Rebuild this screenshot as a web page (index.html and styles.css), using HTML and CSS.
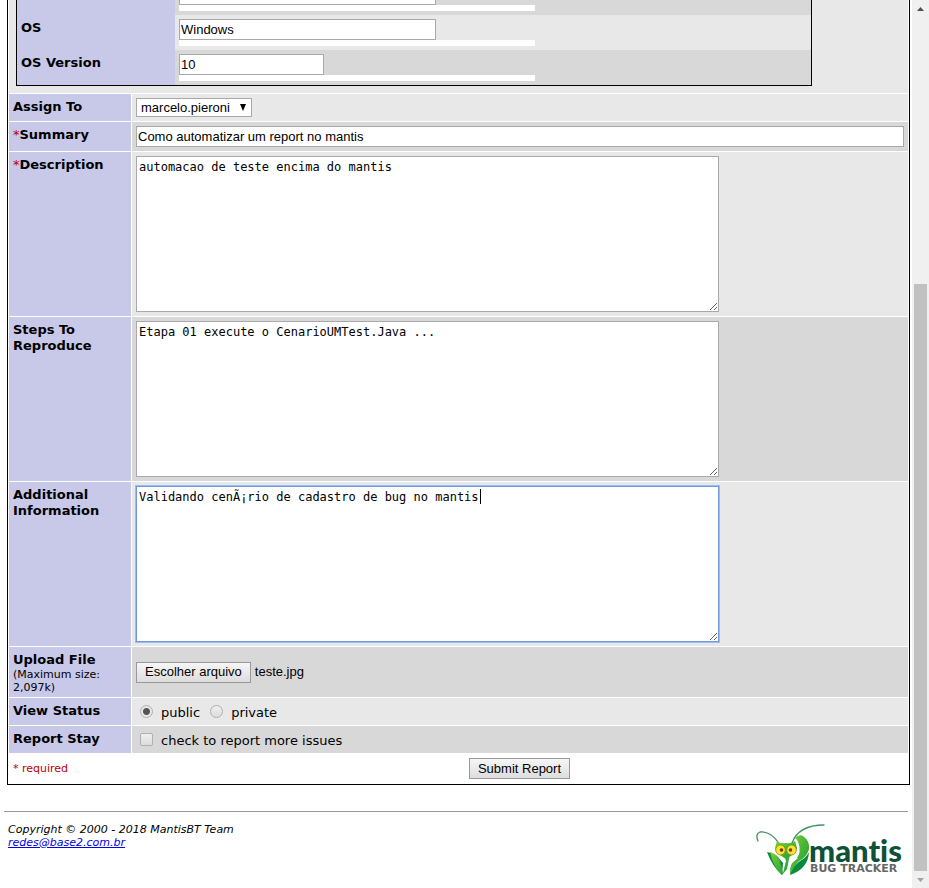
FILE: index.html
```html
<!DOCTYPE html>
<html lang="en">
<head>
<meta charset="utf-8">
<title>Report Issue - MantisBT</title>
<link rel="stylesheet" href="styles.css">
</head>
<body>
<div class="page">
  <form class="report">
    <div class="profile-row">
      <div class="profile">
        <label class="profile-label" for="platform"></label>
        <div class="profile-value odd"><input class="field medium" id="platform" type="text"><div class="suggest"></div></div>
        <label class="profile-label" for="os">OS</label>
        <div class="profile-value"><input class="field medium" id="os" type="text" value="Windows"><div class="suggest"></div></div>
        <label class="profile-label" for="os-version">OS Version</label>
        <div class="profile-value odd"><input class="field short" id="os-version" type="text" value="10"><div class="suggest"></div></div>
      </div>
    </div>
    <div class="row">
      <label class="label" for="assign">Assign To</label>
      <div class="value">
        <div class="select-box"><select class="select" id="assign"><option>marcelo.pieroni</option></select><svg class="arrow" viewBox="0 0 6 7" aria-hidden="true"><path d="M0 0h6L3 7z"/></svg></div>
      </div>
    </div>
    <div class="row">
      <label class="label" for="summary"><span class="star">*</span>Summary</label>
      <div class="value odd"><input class="field" id="summary" type="text" value="Como automatizar um report no mantis"></div>
    </div>
    <div class="row">
      <label class="label" for="description"><span class="star">*</span>Description</label>
      <div class="value"><textarea class="area" id="description">automacao de teste encima do mantis</textarea></div>
    </div>
    <div class="row">
      <label class="label" for="steps">Steps To Reproduce</label>
      <div class="value odd"><textarea class="area" id="steps">Etapa 01 execute o CenarioUMTest.Java ...</textarea></div>
    </div>
    <div class="row">
      <label class="label" for="additional">Additional Information</label>
      <div class="value"><div class="area-box"><textarea class="area active" id="additional">Validando cenÃ¡rio de cadastro de bug no mantis</textarea><span class="caret"></span></div></div>
    </div>
    <div class="row">
      <div class="label">Upload File<div class="hint">(Maximum size: 2,097k)</div></div>
      <div class="value odd file"><button class="button" type="button">Escolher arquivo</button><span class="filename">teste.jpg</span></div>
    </div>
    <div class="row">
      <div class="label">View Status</div>
      <div class="value options">
        <label class="option"><input class="radio" type="radio" name="view" checked>public</label>
        <label class="option"><input class="radio" type="radio" name="view">private</label>
      </div>
    </div>
    <div class="row">
      <div class="label">Report Stay</div>
      <div class="value odd options"><label class="option"><input class="check" type="checkbox">check to report more issues</label></div>
    </div>
    <div class="actions">
      <span class="required">* required</span>
      <div class="submit"><button class="button" type="submit">Submit Report</button></div>
    </div>
  </form>
  <footer class="footer">
    <address class="copyright">Copyright © 2000 - 2018 MantisBT Team<br><a href="mailto:redes@base2.com.br">redes@base2.com.br</a></address>
    <svg class="logo" viewBox="0 0 148 54" role="img" aria-label="Mantis Bug Tracker">
      <defs>
        <linearGradient id="leaf" x1="0" y1="0" x2="1" y2="1"><stop offset="0" stop-color="#7ccf38"/><stop offset="1" stop-color="#159a35"/></linearGradient>
      </defs>
      <g fill="none" stroke="#3f9360" stroke-width="1.300" stroke-linecap="round">
        <path d="M23 21C18 12 10 8 4 9Q-1 11 2 18"/>
        <path d="M36 20C40 9 49 2 68 2"/>
      </g>
      <path fill="#0a8a3a" d="M11 29Q18 30 22 34L27 40 26 52Q16 43 11 29z"/>
      <path fill="url(#leaf)" d="M14 29Q24 32 25 42L27 50 30 38 28 31 34 31 31 46 26 52Q17 44 14 29z"/>
      <path fill="url(#leaf)" d="M39 15Q43 11 47 13Q54 18 53 26Q51 34 43 38Q38 43 34 52Q33 40 41 35Q45 29 43 22Q42 17 39 15z"/>
      <path fill="#fff" d="M45 26L40 31 43 31 38 35 42 35 36 40Q36 34 45 26z"/>
      <path fill="#0a8a3a" d="M53 29Q52 46 34 52Q37 43 44 38Q50 35 53 29z"/>
      <path fill="url(#leaf)" d="M21 18Q24 21 30 20Q36 21 39 18L41 25Q39 31 33 34L30 36 27 34Q21 31 19 25z"/>
      <ellipse cx="24.500" cy="27" rx="4.800" ry="5" fill="#ffe02e" stroke="#6b9c16" stroke-width=".8"/>
      <ellipse cx="35.500" cy="27" rx="4.800" ry="5" fill="#ffe02e" stroke="#6b9c16" stroke-width=".8"/>
      <circle cx="25.500" cy="27" r="1.800" fill="#74390b"/>
      <circle cx="34.500" cy="27" r="1.800" fill="#74390b"/>
      <text class="logo-name" x="53" y="39">mantis</text>
      <text class="logo-sub" x="54" y="49">BUG TRACKER</text>
    </svg>
  </footer>
</div>
<div class="scrollbar" aria-hidden="true">
  <svg class="scroll-arrow" viewBox="0 0 17 17"><path fill="#505050" d="M5 11h7L8.500 7z"/></svg>
  <div class="track"><div class="thumb"></div></div>
  <svg class="scroll-arrow" viewBox="0 0 17 17"><path fill="#a3a3a3" d="M5 7h7l-3.500 4z"/></svg>
</div>
</body>
</html>
```
FILE: styles.css
```css
* { box-sizing: border-box; }
body {
  margin: 0;
  display: flex;
  height: 100vh;
  overflow: hidden;
  background: #fff;
  color: #000;
  font: 13px/16px Verdana, "DejaVu Sans", sans-serif;
}
.page { flex: 1; min-width: 0; }
.report {
  margin: 0 2px 0 7px;
  padding: 0 1px;
  border: solid #000;
  border-width: 0 1px 1px;
}
.profile-row {
  overflow: hidden;
  padding: 0 96px 7px 7px;
  background: #e8e8e8;
}
.profile {
  display: grid;
  grid-template-columns: 158px 1fr;
  margin-top: -20px;
  border: solid #000;
  border-width: 0 1px 1px;
}
.profile-label, .label {
  padding: 5px 4px 3px;
  background: #c8c8e8;
  font-weight: bold;
}
.profile-value, .value { padding: 4px; background: #e8e8e8; }
.suggest { width: 356px; max-width: 100%; height: 6px; background: #fff; }
.row {
  display: grid;
  grid-template-columns: 122px 1fr;
  column-gap: 1px;
  margin-top: 1px;
}
.odd { background: #d8d8d8; }
.star { color: #b00; font-weight: normal; }
.field, .select, .button {
  display: block;
  height: 21px;
  border: 1px solid #a9a9a9;
  background: #fff;
  color: #000;
  font: 13px/16px Arial, "Liberation Sans", sans-serif;
}
.field { width: 100%; padding: 1px; }
.medium { width: 257px; }
.short { width: 145px; }
.select-box { position: relative; width: 116px; }
.select { appearance: none; width: 100%; height: 19px; padding: 0 4px; border-radius: 0; }
.arrow { position: absolute; top: 6px; right: 6px; width: 6px; height: 7px; }
.area, .area-box { font: 12px/15px "DejaVu Sans Mono", monospace; }
.area {
  display: block;
  width: 583px;
  max-width: 100%;
  height: 156px;
  padding: 3px 2px;
  border: 1px solid #a9a9a9;
  background: #fff;
  color: #000;
}
.active { border-color: #6f98e0; outline: 1px solid #9dbcf0; }
.area-box { position: relative; }
.caret {
  position: absolute;
  top: 3px;
  left: calc(47ch + 4px);
  width: 1px;
  height: 15px;
  background: #000;
}
.hint { font-size: 11px; line-height: 13px; font-weight: normal; }
.file { display: flex; align-items: center; gap: 4px; }
.filename { font: 13px/16px Arial, "Liberation Sans", sans-serif; }
.button {
  padding: 0 8px;
  border-color: #999;
  background: linear-gradient(#f6f6f6, #ddd);
}
.options { display: flex; gap: 6px; }
.option { display: flex; align-items: flex-end; gap: 8px; padding-top: 3px; }
.radio, .check {
  appearance: none;
  align-self: flex-start;
  width: 13px;
  height: 13px;
  margin: 0 0 0 4px;
  border: 1px solid #b0b0b0;
  background: linear-gradient(#eee, #ddd);
}
.radio { border-radius: 50%; }
.radio:checked { background: radial-gradient(circle, #555 0 3px, #e8e8e8 4px); }
.check { border-radius: 2px; }
.actions {
  display: grid;
  grid-template-columns: 122px 1fr;
  align-items: center;
  padding: 5px 0;
}
.required { padding-left: 4px; color: #b00; font-size: 11px; }
.submit { display: flex; justify-content: center; }
.footer {
  display: flex;
  justify-content: space-between;
  margin: 26px 4px 0;
  padding: 11px 4px 0;
  border-top: 1px solid #999;
}
.copyright { font-size: 11px; line-height: 13px; }
.copyright a { color: #00e; }
.logo { width: 148px; height: 54px; }
.logo-name { font: 900 31px Lato, sans-serif; font-variant-ligatures: none; fill: #0c5138; }
.logo-sub { font: bold 11px "DejaVu Sans", sans-serif; fill: #666; }
.scrollbar {
  display: flex;
  flex-direction: column;
  width: 17px;
  background: #f0f0f0;
}
.scroll-arrow { width: 17px; height: 17px; }
.track { flex: 1; display: grid; grid-template-rows: 267fr 587fr; padding: 0 2px; }
.thumb { grid-row: 2; background: #c1c1c1; }
```
